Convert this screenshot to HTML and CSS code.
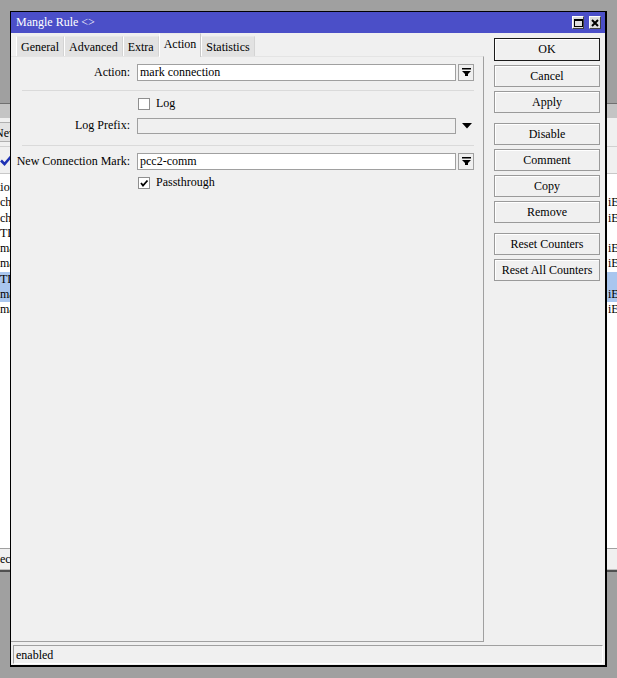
FILE: index.html
```html
<!DOCTYPE html>
<html lang="en">
<head>
    <meta charset="UTF-8">
    <title>Mangle Rule</title>
    <link rel="stylesheet" href="styles.css">
</head>
<body>
    <div class="desk">
        <!-- window behind the dialog -->
        <div class="bgwin">
            <div class="bg-band"></div>
            <div class="bg-tabs"><span class="bg-tab">New</span></div>
            <div class="bg-tool">
                <svg class="bg-check" width="12" height="11" viewBox="0 0 12 11"><path d="M1 5.5 L4.5 9 L11 1.5" fill="none" stroke="#1e32b4" stroke-width="2.6"/></svg>
            </div>
            <div class="bg-list">
                <div class="bg-row"><span class="l shift">tion</span><span class="r"></span></div>
                <div class="bg-row"><span class="l">change</span><span class="r">iEther1</span></div>
                <div class="bg-row"><span class="l">change</span><span class="r">iEther2</span></div>
                <div class="bg-row"><span class="l">TLS</span><span class="r"></span></div>
                <div class="bg-row"><span class="l">mark</span><span class="r">iEther1</span></div>
                <div class="bg-row"><span class="l">mark</span><span class="r">iEther2</span></div>
                <div class="bg-row sel"><span class="l">TLS</span><span class="r"></span></div>
                <div class="bg-row sel"><span class="l">mark</span><span class="r">iEther1</span></div>
                <div class="bg-row"><span class="l">mark</span><span class="r">iEther2</span></div>
            </div>
            <div class="bg-status"><span>ect</span></div>
        </div>

        <div class="dialog">
            <div class="titlebar">
                <span class="title">Mangle Rule &lt;&gt;</span>
                <span class="tbtn">
                    <svg width="9" height="8" viewBox="0 0 9 8"><rect x="0.5" y="0.5" width="8" height="7" fill="none" stroke="#000"/><rect x="0" y="0" width="9" height="2" fill="#000"/></svg>
                </span>
                <span class="tbtn">
                    <svg width="8" height="8" viewBox="0 0 8 8"><path d="M1 1 L7 7 M7 1 L1 7" stroke="#000" stroke-width="2"/></svg>
                </span>
            </div>

            <div class="body">
                <div class="left">
                    <div class="tabs">
                        <span class="tab">General</span>
                        <span class="tab">Advanced</span>
                        <span class="tab">Extra</span>
                        <span class="tab active">Action</span>
                        <span class="tab">Statistics</span>
                    </div>

                    <div class="panel">
                        <div class="row r-action">
                            <label class="lbl">Action:</label>
                            <div class="field">
                                <div class="input">mark connection</div>
                                <span class="ddbtn">
                                    <svg width="9" height="9" viewBox="0 0 9 9"><rect x="0" y="0" width="9" height="1.5" fill="#000"/><polygon points="0,3 9,3 4.5,7.5" fill="#000"/><rect x="3" y="6" width="3" height="2" fill="#000"/></svg>
                                </span>
                            </div>
                        </div>

                        <div class="sep s1"></div>

                        <div class="row r-log">
                            <span class="lbl"></span>
                            <div class="field">
                                <span class="chk"></span><span class="chk-text">Log</span>
                            </div>
                        </div>

                        <div class="row r-prefix">
                            <label class="lbl">Log Prefix:</label>
                            <div class="field">
                                <div class="input disabled"></div>
                                <span class="ddplain">
                                    <svg width="10" height="6" viewBox="0 0 10 6"><polygon points="0,0 10,0 5,5.5" fill="#000"/></svg>
                                </span>
                            </div>
                        </div>

                        <div class="sep s2"></div>

                        <div class="row r-mark">
                            <label class="lbl">New Connection Mark:</label>
                            <div class="field">
                                <div class="input">pcc2-comm</div>
                                <span class="ddbtn">
                                    <svg width="9" height="9" viewBox="0 0 9 9"><rect x="0" y="0" width="9" height="1.5" fill="#000"/><polygon points="0,3 9,3 4.5,7.5" fill="#000"/><rect x="3" y="6" width="3" height="2" fill="#000"/></svg>
                                </span>
                            </div>
                        </div>

                        <div class="row r-pass">
                            <span class="lbl"></span>
                            <div class="field">
                                <span class="chk">
                                    <svg width="10" height="10" viewBox="0 0 10 10"><path d="M2 5 L4 7.5 L8.5 2.5" fill="none" stroke="#000" stroke-width="1.8"/></svg>
                                </span><span class="chk-text">Passthrough</span>
                            </div>
                        </div>
                    </div>
                </div>

                <div class="buttons">
                    <button class="btn default">OK</button>
                    <button class="btn">Cancel</button>
                    <button class="btn">Apply</button>
                    <button class="btn group">Disable</button>
                    <button class="btn">Comment</button>
                    <button class="btn">Copy</button>
                    <button class="btn">Remove</button>
                    <button class="btn group">Reset Counters</button>
                    <button class="btn">Reset All Counters</button>
                </div>
            </div>

            <div class="status">
                <div class="status-box">enabled</div>
            </div>
        </div>
    </div>
</body>
</html>
```

FILE: styles.css
```css
:root {
    --desk: #a0a0a0;
    --face: #f0f0f0;
    --line: #a0a0a0;
    --title: #4b4fc8;
    --sel: #a9c6ee;
}

* {
    box-sizing: border-box;
    margin: 0;
    padding: 0;
}

body {
    background: var(--desk);
    font-family: "Liberation Serif", "DejaVu Serif", serif;
    font-size: 12px;
    color: #000;
}

.desk {
    position: relative;
    width: 617px;
    height: 678px;
    overflow: hidden;
}

/* window behind */
.bgwin {
    position: absolute;
    left: 0;
    top: 103px;
    width: 617px;
    height: 469px;
    background: #fff;
    border-top: 1px solid #707070;
    border-bottom: 2px solid #505050;
    display: flex;
    flex-direction: column;
}

.bg-band {
    height: 14px;
    background: #c4c4c4;
}

.bg-tabs {
    height: 29px;
    background: var(--face);
    border-bottom: 1px solid #d0d0d0;
    padding-top: 4px;
}

.bg-tab {
    display: inline-block;
    height: 20px;
    line-height: 20px;
    margin-left: -12px;
    padding: 0 6px;
    background: #e4e4e4;
    border: 1px solid #b0b0b0;
}

.bg-tool {
    height: 27px;
    background: var(--face);
    border-bottom: 1px solid #c8c8c8;
    padding: 8px 0 0 0;
}

.bg-check {
    display: block;
}

.bg-list {
    flex: 1;
    padding-top: 6px;
}

.bg-row {
    display: flex;
    justify-content: space-between;
    height: 15.3px;
    line-height: 15px;
    white-space: nowrap;
    overflow: hidden;
}

.bg-row.sel {
    background: var(--sel);
}

.bg-row .l.shift {
    margin-left: -3px;
}

.bg-row .r {
    width: 9px;
    overflow: hidden;
}

.bg-status {
    height: 22px;
    line-height: 20px;
    background: var(--face);
    border-top: 1px solid var(--line);
    border-bottom: 1px solid #c0c0c0;
}

/* dialog */
.dialog {
    position: absolute;
    left: 10px;
    top: 11px;
    width: 597px;
    height: 656px;
    background: var(--face);
    border: 1px solid #000;
    border-right-width: 2px;
    border-bottom-width: 2px;
    display: flex;
    flex-direction: column;
}

.titlebar {
    height: 21px;
    background: var(--title);
    color: #fff;
    display: flex;
    align-items: center;
    padding: 0 4px 0 5px;
    gap: 5px;
}

.title {
    flex: 1;
}

.tbtn {
    width: 12px;
    height: 13px;
    background: #dedede;
    border: 1px solid #404040;
    border-top-color: #fff;
    border-left-color: #fff;
    display: flex;
    align-items: center;
    justify-content: center;
}

.body {
    height: 610px;
    display: flex;
}

.left {
    width: 473px;
    display: flex;
    flex-direction: column;
}

.tabs {
    height: 23px;
    display: flex;
    align-items: flex-end;
    padding-left: 5px;
}

.tab {
    height: 20px;
    line-height: 20px;
    padding: 0 4px;
    background: #e2e2e2;
    border-left: 1px solid #fff;
    border-top: 1px solid #e8e8e8;
    border-right: 1px solid #d4d4d4;
}

.tab.active {
    height: 24px;
    line-height: 21px;
    margin-bottom: -1px;
    background: var(--face);
    border-right-color: #c8c8c8;
    position: relative;
}

.panel {
    height: 586px;
    border-top: 1px solid #e4e4e4;
    border-right: 1px solid var(--line);
    border-bottom: 1px solid var(--line);
    padding-top: 7px;
}

.row {
    display: flex;
    align-items: center;
    height: 17px;
    gap: 7px;
}

.lbl {
    width: 119px;
    flex: none;
    text-align: right;
    white-space: nowrap;
}

.field {
    width: 337px;
    display: flex;
    align-items: center;
    gap: 2px;
}

.input {
    width: 319px;
    height: 17px;
    line-height: 15px;
    padding-left: 2px;
    background: #fff;
    border: 1px solid var(--line);
}

.input.disabled {
    height: 16px;
    background: var(--face);
}

.ddbtn {
    width: 16px;
    height: 17px;
    border: 1px solid var(--line);
    display: flex;
    align-items: center;
    justify-content: center;
    padding-bottom: 1px;
}

.ddplain {
    width: 16px;
    height: 17px;
    display: flex;
    align-items: center;
    justify-content: center;
    padding-left: 2px;
}

.sep {
    height: 1px;
    margin-left: 11px;
    width: 452px;
    background: #dadada;
}

.sep.s1 { margin-top: 9px; }
.sep.s2 { margin-top: 11px; }

.r-log { margin-top: 4px; }
.r-prefix { margin-top: 5px; }
.r-mark { margin-top: 7px; }
.r-pass { margin-top: 4px; }

.chk {
    width: 12px;
    height: 12px;
    margin-left: 1px;
    background: #fff;
    border: 1px solid #8f8f8f;
    display: flex;
    align-items: center;
    justify-content: center;
}

.chk-text {
    margin-left: 4px;
}

/* right side buttons */
.buttons {
    width: 106px;
    margin-left: 10px;
    padding-top: 5px;
    display: flex;
    flex-direction: column;
    gap: 4px;
}

.btn {
    height: 22px;
    font: inherit;
    color: #000;
    background: var(--face);
    border: 1px solid #9a9a9a;
    box-shadow: inset 1px 1px 0 #fff;
}

.btn.default {
    height: 23px;
    border-color: #1a1a1a;
}

.btn.group {
    margin-top: 6px;
}

.status {
    height: 22px;
    padding: 2px 2px 1px 2px;
}

.status-box {
    height: 19px;
    line-height: 18px;
    padding-left: 2px;
    border-top: 1px solid var(--line);
    border-left: 1px solid var(--line);
    border-bottom: 1px solid #fff;
    border-right: 1px solid #fff;
}
```
